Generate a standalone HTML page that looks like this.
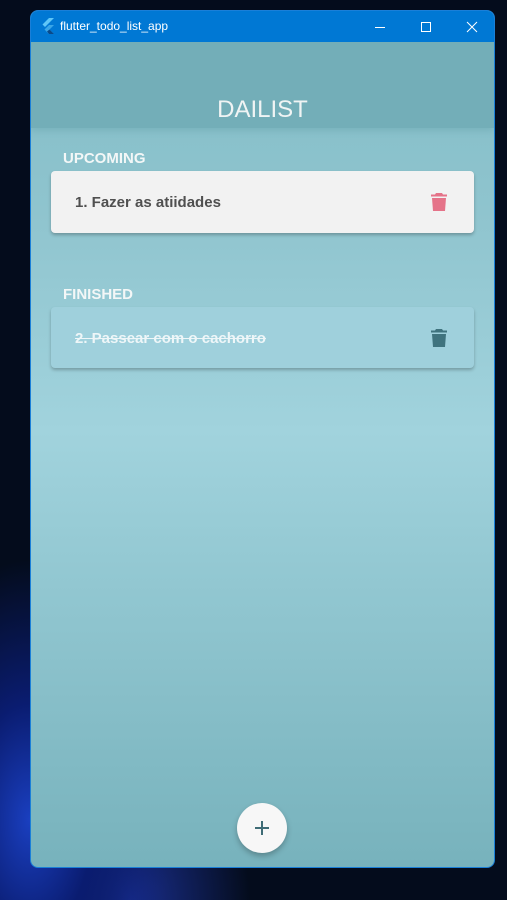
<!DOCTYPE html>
<html><head><style>
*{margin:0;padding:0;box-sizing:border-box}
body{width:507px;height:900px;overflow:hidden;position:relative;font-family:"Liberation Sans",sans-serif;
background:radial-gradient(ellipse 140px 260px at 30px 820px,#1a3fc0 0%,#0a1c70 45%,rgba(3,10,40,0) 100%),radial-gradient(ellipse 120px 150px at 130px 900px,#1a2f90 0%,rgba(3,10,40,0) 100%),#040c1c}
.win{position:absolute;left:30px;top:10px;width:465px;height:858px;border:1px solid #1a7fd8;border-radius:8px;overflow:hidden;
background:linear-gradient(#80bcc6 0px,#8fc4ce 200px,#a1d3dd 420px,#93c8d2 560px,#84bcc6 720px,#77b2bc 858px)}
.tb{height:31px;background:#0078d4;color:#fff;font-size:12px;position:relative}
.tb .t{position:absolute;left:29px;top:8px}
.hdr{height:86px;background:#73aeb8;text-align:center;font-size:24px;padding-top:54px;color:#f0f4f4;box-shadow:0 3px 6px rgba(90,150,160,.3)}
.lbl{position:absolute;left:32px;color:#f3f7f7;font-weight:bold;font-size:15px}
.card{position:absolute;left:20px;width:423px;border-radius:4px;box-shadow:0 2px 3px rgba(0,0,0,.25);font-weight:bold;font-size:15px}
.card span{position:absolute;left:24px;top:23px}
.fab{position:absolute;left:206px;top:792px;width:50px;height:50px;border-radius:50%;background:#f7f7f7;box-shadow:0 3px 6px rgba(0,0,0,.25)}
</style></head><body>
<div class="win">
<div class="tb">
<svg style="position:absolute;left:10px;top:7px" width="14" height="16" viewBox="0 0 14 16"><path d="M8 0h5L4 9 1.5 6.5z" fill="#5fc6f8"/><path d="M8 7h5L8.5 11.5 13 16H8L3.5 11.5z" fill="#3aa6e8"/><path d="M6 13.5l2.5-2L13 16H8z" fill="#0a4a8a"/></svg>
<span class="t">flutter_todo_list_app</span>
<svg style="position:absolute;left:340px;top:9px" width="110" height="14"><path d="M4 7.5h10" stroke="#fff"/><path d="M50.5 2.5h9v9h-9z" stroke="#fff" fill="none"/><path d="M96 2l10 10M106 2L96 12" stroke="#fff"/></svg>
</div>
<div class="hdr">DAILIST</div>
<div class="lbl" style="top:139px">UPCOMING</div>
<div class="card" style="top:160px;height:62px;background:#f2f2f2;color:#505050"><span>1. Fazer as atiidades</span>
<svg style="position:absolute;left:380px;top:22px" width="16" height="18" viewBox="0 0 16 18"><path d="M5 0h6l1 1.5h4v2H0v-2h4zM1 5h14l-1 13H2z" fill="#e57389"/></svg></div>
<div class="lbl" style="top:275px">FINISHED</div>
<div class="card" style="top:296px;height:61px;background:#9fd0dc;color:#eef6f8"><span style="text-decoration:line-through;left:20px;padding-left:4px">2. Passear com o cachorro</span>
<svg style="position:absolute;left:380px;top:22px" width="16" height="18" viewBox="0 0 16 18"><path d="M5 0h6l1 1.5h4v2H0v-2h4zM1 5h14l-1 13H2z" fill="#3f737e"/></svg></div>
<div class="fab"><svg style="position:absolute;left:17px;top:17px" width="16" height="16"><path d="M8 1v14M1 8h14" stroke="#3f6c76" stroke-width="2"/></svg></div>
</div>
</body></html>
